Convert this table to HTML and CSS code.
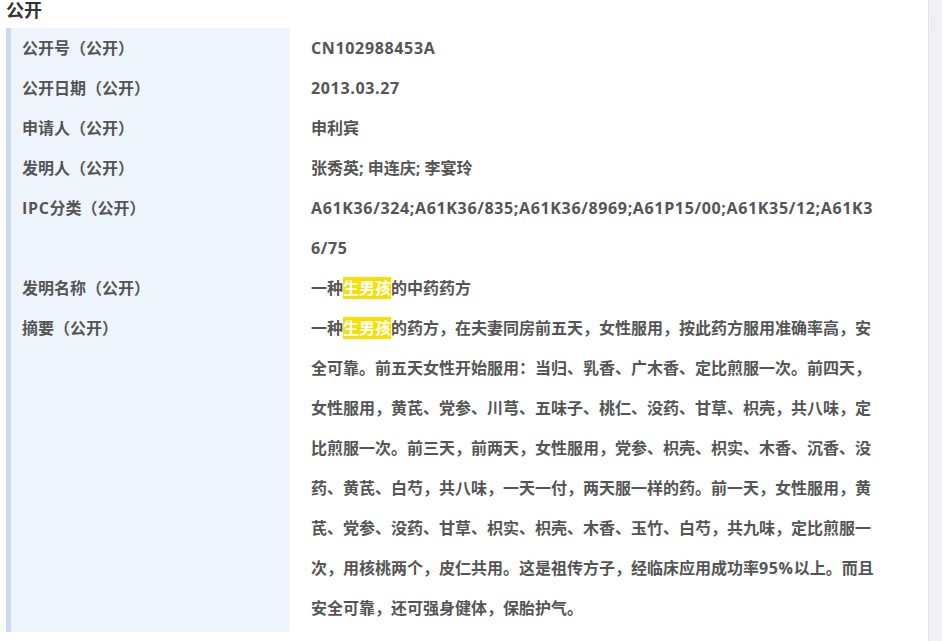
FILE: index.html
```html
<!DOCTYPE html>
<html lang="zh-CN">
<head>
<meta charset="utf-8">
<title>公开</title>
<link rel="stylesheet" href="styles.css">
</head>
<body>
<div class="page">
  <div class="title">公开</div>
  <div class="table">
    <div class="label">公开号（公开）</div>
    <div class="value lat">CN102988453A</div>
    <div class="label">公开日期（公开）</div>
    <div class="value lat">2013.03.27</div>
    <div class="label">申请人（公开）</div>
    <div class="value">申利宾</div>
    <div class="label">发明人（公开）</div>
    <div class="value">张秀英; 申连庆; 李宴玲</div>
    <div class="label"><span class="lat">IPC</span>分类（公开）</div>
    <div class="value lat">A61K36/324;A61K36/835;A61K36/8969;A61P15/00;A61K35/12;A61K36/75</div>
    <div class="label">发明名称（公开）</div>
    <div class="value">一种<span class="hl">生男孩</span>的中药药方</div>
    <div class="label">摘要（公开）</div>
    <div class="value">一种<span class="hl">生男孩</span>的药方，在夫妻同房前五天，女性服用，按此药方服用准确率高，安全可靠。前五天女性开始服用：当归、乳香、广木香、定比煎服一次。前四天，女性服用，黄芪、党参、川芎、五味子、桃仁、没药、甘草、枳壳，共八味，定比煎服一次。前三天，前两天，女性服用，党参、枳壳、枳实、木香、沉香、没药、黄芪、白芍，共八味，一天一付，两天服一样的药。前一天，女性服用，黄芪、党参、没药、甘草、枳实、枳壳、木香、玉竹、白芍，共九味，定比煎服一次，用核桃两个，皮仁共用。这是祖传方子，经临床应用成功率<span class="lat">95%</span>以上。而且安全可靠，还可强身健体，保胎护气。</div>
  </div>
</div>
<div class="thumb"></div>
</body>
</html>
```

FILE: styles.css
```css
html, body {
  margin: 0;
  padding: 0;
}
body {
  background: #f3f3f7;
  font-family: "Open Sans", "Noto Sans CJK SC", sans-serif;
  color: #555;
  min-height: 641px;
}
.page {
  box-sizing: border-box;
  width: 929px;
  min-height: 641px;
  background: #fff;
  border-right: 1px solid #e2e2e9;
  padding-left: 6px;
}
.title {
  font-size: 18px;
  font-weight: bold;
  color: #333;
  line-height: 21px;
  height: 28px;
}
.table {
  display: grid;
  grid-template-columns: 279px 596px;
  border-left: 5px solid #cbdaf3;
  background: linear-gradient(to right, #eef5fd 279px, #fff 279px);
  padding-bottom: 4px;
  font-size: 16px;
  line-height: 40px;
  font-weight: bold;
}
.label {
  padding-left: 11px;
  color: #555;
}
.value {
  padding-left: 21px;
  word-break: break-all;
}
.lat {
  letter-spacing: 0.65px;
}
.hl {
  background: #f7e000;
  color: #fff;
}
.thumb {
  position: absolute;
  left: 931px;
  top: 16px;
  width: 2px;
  height: 16px;
  border-left: 1px solid #e4e4ea;
  border-right: 1px solid #e4e4ea;
}
```
